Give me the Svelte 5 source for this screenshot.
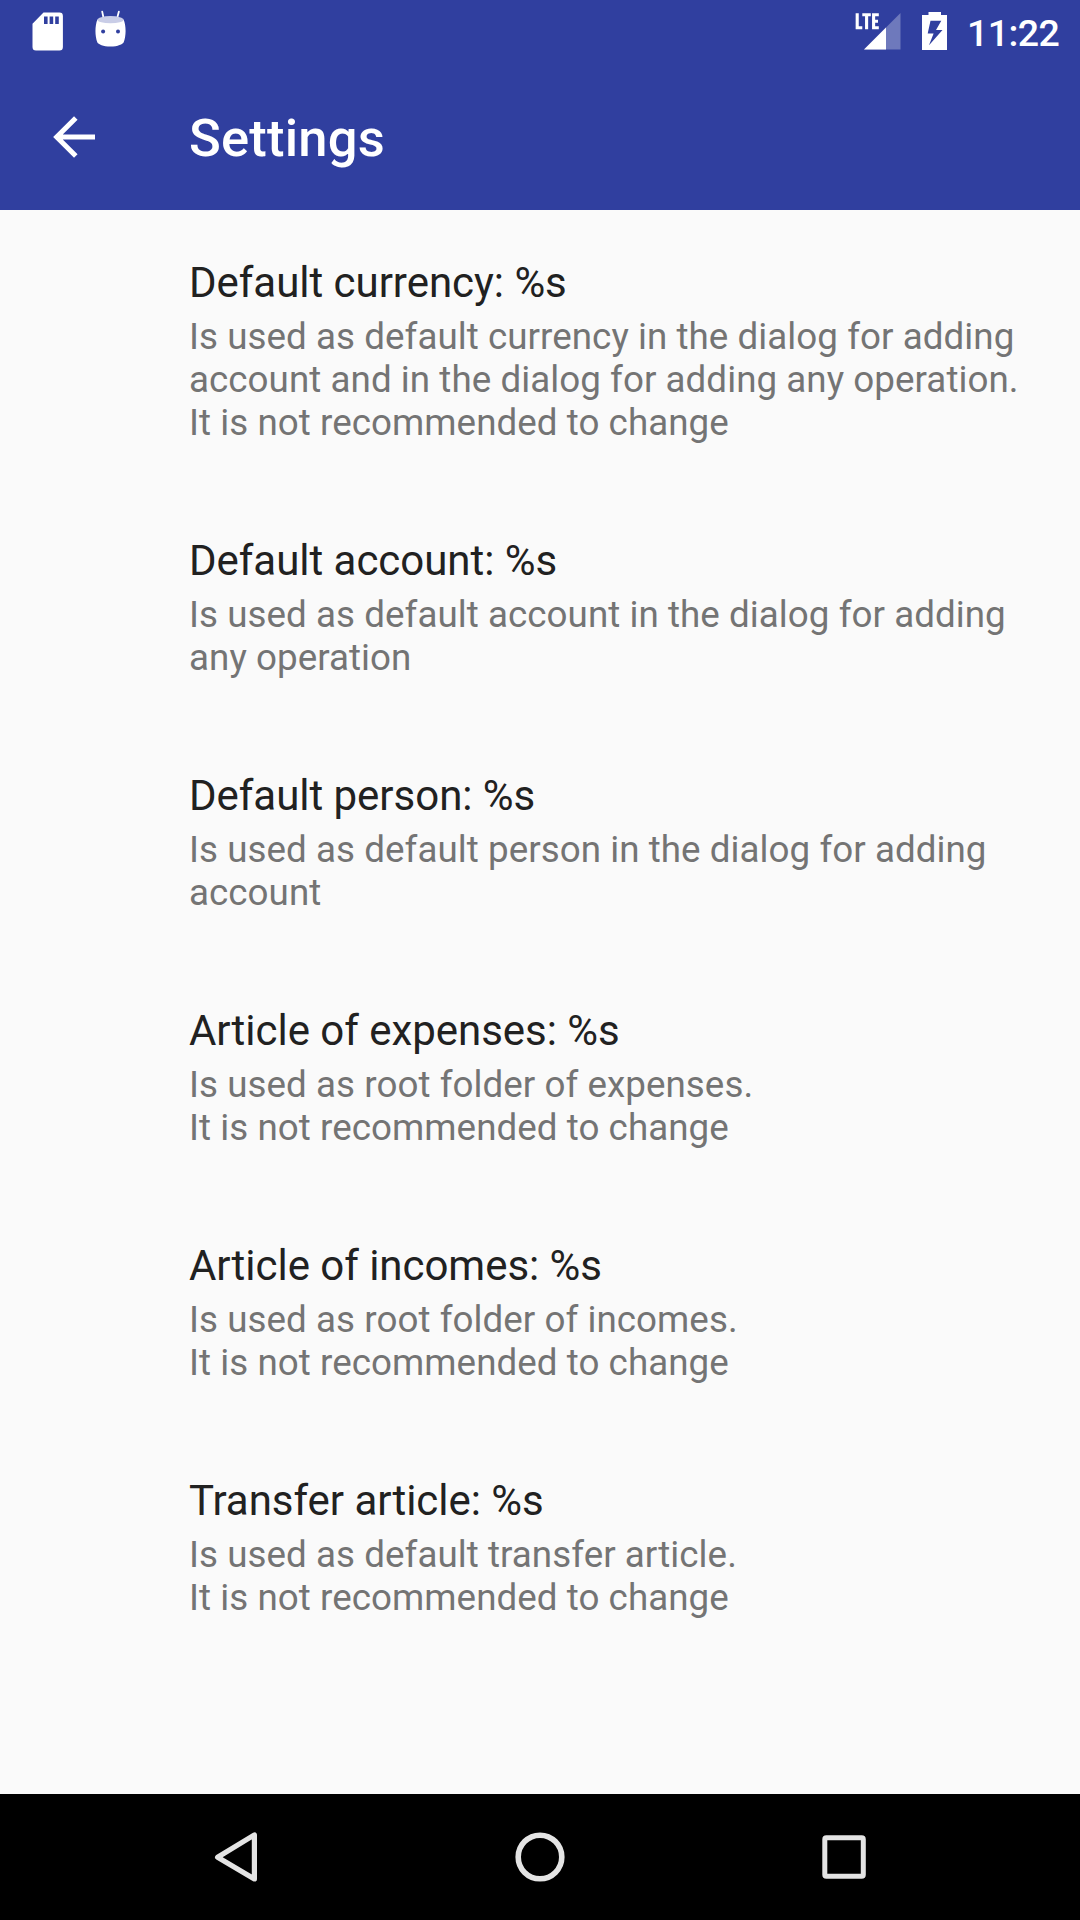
<script>
  const preferences = [
    {
      title: 'Default currency: %s',
      summary:
        'Is used as default currency in the dialog for adding\naccount and in the dialog for adding any operation.\nIt is not recommended to change',
    },
    {
      title: 'Default account: %s',
      summary: 'Is used as default account in the dialog for adding\nany operation',
    },
    {
      title: 'Default person: %s',
      summary: 'Is used as default person in the dialog for adding\naccount',
    },
    {
      title: 'Article of expenses: %s',
      summary: 'Is used as root folder of expenses.\nIt is not recommended to change',
    },
    {
      title: 'Article of incomes: %s',
      summary: 'Is used as root folder of incomes.\nIt is not recommended to change',
    },
    {
      title: 'Transfer article: %s',
      summary: 'Is used as default transfer article.\nIt is not recommended to change',
    },
  ];
</script>

<div class="screen">
  <header>
    <div class="status">
      <div class="group">
        <svg width="32" height="63" viewBox="0 0 32 63" aria-hidden="true">
          <path
            fill="#fff"
            fill-rule="evenodd"
            d="M11.5 12.6H27.5Q30.9 12.6 30.9 16V47Q30.9 50.5 27.5 50.5H4Q.5 50.5 .5 47V23.8ZM12 16.5V24H15.6V16.5ZM17.6 16.5V24H21.2V16.5ZM23.2 16.5V24H26.8V16.5Z"
          />
        </svg>
        <svg width="32" height="63" viewBox="95 0 32 63" aria-hidden="true">
          <path d="M102.2 11.6 103.6 18.3M118.9 11.6 117.1 18.3" stroke="#fff" stroke-width="1.8" stroke-linecap="round" />
          <path
            fill="#fff"
            d="M97.4 19.5C101 23.5 120 23.5 123.6 19.5C126.3 26 126.2 36 123.6 42.5C122.8 44 118 46.6 110.5 46.6C103 46.6 98.5 44.2 97.4 42.5C94.8 36 94.8 26 97.4 19.5Z"
          />
          <ellipse cx="110.5" cy="19.7" rx="13.1" ry="3.6" fill="#c9cde7" />
          <circle cx="103.1" cy="31.5" r="2" fill="#303f9f" />
          <circle cx="118" cy="31.5" r="2" fill="#303f9f" />
        </svg>
      </div>
      <div class="group right">
        <svg width="48" height="63" viewBox="854 0 48 63" aria-hidden="true">
          <path fill="#fff" fill-opacity=".3" d="M900.5 13V49.5H864Z" />
          <path fill="#fff" d="M886 27.5V49.5H864Z" />
          <path
            fill="none"
            stroke="#fff"
            stroke-width="3.1"
            d="M857.2 13.2V27.7H862.3M862.3 14.8H870.8M866.6 14.8V29.3M878.8 14.8H873.6V27.7H878.8M873.6 21.2H878"
          />
        </svg>
        <svg width="25" height="63" viewBox="922 0 25 63" aria-hidden="true">
          <path
            fill="#fff"
            fill-rule="evenodd"
            d="M928.5 12H941V15H947V50H922V15H928.5ZM930.5 20.8 927.7 33.4H933.6L929 45.3 942.5 29.9H936L941.3 20.8Z"
          />
        </svg>
        <span class="clock">11:22</span>
      </div>
    </div>
    <div class="toolbar">
      <svg width="42" height="42" viewBox="0 0 42 42" aria-hidden="true">
        <path fill="none" stroke="#fff" stroke-width="5" d="M42 21H4M22.8 1.9 3.7 21 22.8 40.1" />
      </svg>
      <h1>Settings</h1>
    </div>
  </header>

  <main>
    {#each preferences as item}
      <section>
        <h2>{item.title}</h2>
        <p>{item.summary}</p>
      </section>
    {/each}
  </main>

  <nav>
    <svg width="50" height="54" viewBox="211 1830 50 54" aria-hidden="true">
      <path
        fill="none"
        stroke="#e4e4e4"
        stroke-width="5.2"
        stroke-linejoin="round"
        d="M254.4 1834.9V1878.9L217.6 1857.3Z"
      />
    </svg>
    <svg width="50" height="54" viewBox="515 1830 50 54" aria-hidden="true">
      <circle cx="540" cy="1857" r="21.8" fill="none" stroke="#e4e4e4" stroke-width="5.6" />
    </svg>
    <svg width="50" height="54" viewBox="819 1830 50 54" aria-hidden="true">
      <rect x="824.8" y="1837.8" width="38.5" height="38.5" rx="1.6" fill="none" stroke="#e4e4e4" stroke-width="5" />
    </svg>
  </nav>
</div>

<style>
  :global(body) {
    margin: 0;
  }
  .screen {
    display: flex;
    flex-direction: column;
    width: 1080px;
    height: 1920px;
    overflow: hidden;
    background: #fafafa;
    font-family: Roboto, sans-serif;
  }
  svg {
    display: block;
    flex: none;
  }
  header {
    height: 210px;
    background: #303f9f;
    color: #fff;
  }
  .status {
    display: flex;
    justify-content: space-between;
    height: 63px;
    padding-left: 32px;
  }
  .group {
    display: flex;
    gap: 31px;
  }
  .right {
    gap: 20px;
    width: 226px;
  }
  .clock {
    font-size: 37.5px;
    font-weight: 500;
    line-height: 66px;
    letter-spacing: -0.6px;
    white-space: nowrap;
  }
  .toolbar {
    display: flex;
    align-items: center;
    height: 147px;
    padding-left: 52.6px;
    box-sizing: border-box;
  }
  h1 {
    margin: 2px 0 0 94.4px;
    font-size: 52.5px;
    font-weight: 500;
    line-height: 62px;
    letter-spacing: 0.2px;
  }
  main {
    flex: 1;
  }
  section {
    padding: 48px 42px 44px 189px;
  }
  h2 {
    margin: 0 0 8px;
    color: #212121;
    font-size: 42px;
    font-weight: 400;
    line-height: 49px;
    letter-spacing: -0.03px;
  }
  p {
    margin: 0;
    color: #747474;
    font-size: 36.75px;
    line-height: 43px;
    letter-spacing: 0.05px;
    white-space: pre;
  }
  nav {
    display: flex;
    justify-content: space-between;
    align-items: center;
    height: 126px;
    padding: 0 211px;
    box-sizing: border-box;
    background: #000;
  }
</style>
